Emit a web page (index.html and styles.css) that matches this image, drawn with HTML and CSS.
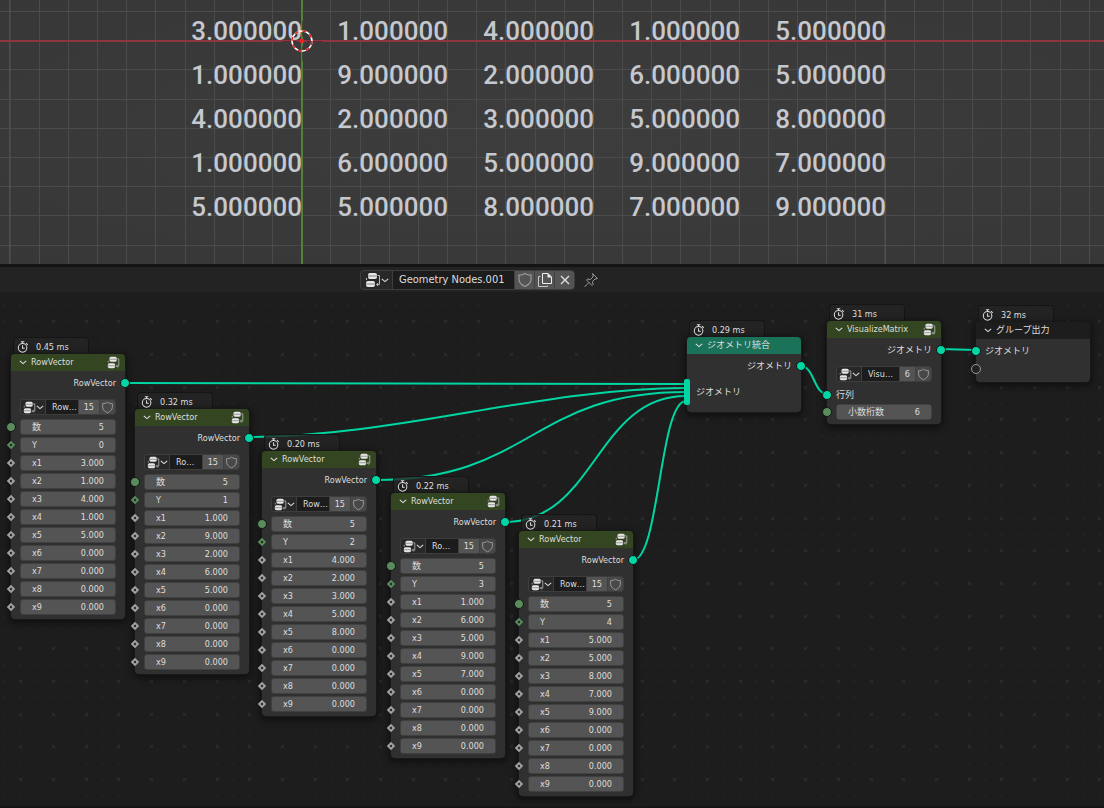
FILE: index.html
```
<!DOCTYPE html>
<html lang="ja">
<head>
    <meta charset="UTF-8">
    <title>Geometry Nodes</title>
    <link rel="stylesheet" href="styles.css">
</head>

<body>
    <svg class="symbols" aria-hidden="true">
        <symbol id="icon-tree" viewBox="0 0 16 16">
            <rect x="3" y="1" width="9" height="6" rx="2" fill="#e6e6e6"/>
            <rect x="1" y="9" width="9" height="6" rx="2" fill="#e6e6e6"/>
            <path d="M3 4h9M1 12h9" stroke="#6a6a6a" stroke-width="0.800" fill="none"/>
            <path d="M12.500 3.500h2v9h-3M13.200 10.800l-1.700 1.700 1.700 1.700M1.500 8V6" stroke="#b8b8b8" fill="none"/>
        </symbol>
        <symbol id="icon-chevron" viewBox="0 0 10 10">
            <path d="M1 3.500L5 7l4-3.500" stroke="currentColor" stroke-width="1.300" fill="none"/>
        </symbol>
        <symbol id="icon-shield" viewBox="0 0 16 16">
            <path d="M8 1.500C6 3 4 3.200 2 3.200V7.500c0 3.500 3 5.500 6 7 3-1.500 6-3.500 6-7V3.200C12 3.200 10 3 8 1.500z" stroke="currentColor" stroke-width="1.200" fill="none"/>
        </symbol>
        <symbol id="icon-copy" viewBox="0 0 16 16">
            <path d="M5.500 1.500h5.500l3.500 3.500v6.500h-9z" stroke="#eeeeee" fill="none"/>
            <path d="M10.500 1l4.500 4.500h-4.500z" fill="#eeeeee"/>
            <path d="M3.500 4.500h-2v10h9v-1" stroke="#c8c8c8" fill="none"/>
        </symbol>
        <symbol id="icon-close" viewBox="0 0 16 16">
            <path d="M4 4l8 8M12 4l-8 8" stroke="#e6e6e6" stroke-width="1.200" fill="none"/>
        </symbol>
        <symbol id="icon-pin" viewBox="0 0 16 16">
            <path d="M9.500 1.500l5 5-1.500.500-1 0-2.500 2.500.500 3-1 1L3.500 8l1-1 3 .500L10 5V3zM6 10.500l-4.500 4.500" stroke="#9a9a9a" fill="none"/>
        </symbol>
        <symbol id="icon-timer" viewBox="0 0 14 14">
            <circle cx="6.500" cy="8" r="5" stroke="#dddddd" stroke-width="1.200" fill="none"/>
            <path d="M4.500 1h4M6.500 1v2M10.500 2.500l2 2M6.500 5v3.500h2.500" stroke="#dddddd" stroke-width="1.200" fill="none"/>
        </symbol>
    </svg>

    <section class="viewport">
        <svg class="viewport-grid">
            <path id="floor" stroke="#4b4b4b"/>
            <path d="M10 0V264M593.500 0V264M885 0V264" stroke="#555555"/>
            <rect y="40" width="100%" height="2" fill="#8f3540"/>
            <rect x="301" width="2" height="100%" fill="#54803a"/>
        </svg>
        <table class="matrix">
            <tr><td>3.000000</td><td>1.000000</td><td>4.000000</td><td>1.000000</td><td>5.000000</td></tr>
            <tr><td>1.000000</td><td>9.000000</td><td>2.000000</td><td>6.000000</td><td>5.000000</td></tr>
            <tr><td>4.000000</td><td>2.000000</td><td>3.000000</td><td>5.000000</td><td>8.000000</td></tr>
            <tr><td>1.000000</td><td>6.000000</td><td>5.000000</td><td>9.000000</td><td>7.000000</td></tr>
            <tr><td>5.000000</td><td>5.000000</td><td>8.000000</td><td>7.000000</td><td>9.000000</td></tr>
        </table>
        <svg class="cursor" viewBox="0 0 40 40">
            <path d="M0 20.500h15M25 20.500h15M20.500 0v15M20.500 25v15" stroke="#222222" opacity="0.500"/>
            <circle cx="20" cy="20" r="10" fill="none" stroke="#ffffff" stroke-width="1.500"/>
            <circle cx="20" cy="20" r="10" fill="none" stroke="#e02020" stroke-width="1.500" stroke-dasharray="3.930"/>
            <rect x="18" y="18" width="4" height="4" fill="#f02020"/>
        </svg>
    </section>

    <header class="toolbar">
        <div class="picker picker-large">
            <button class="pick" aria-label="Browse node trees"><svg class="icon"><use href="#icon-tree"/></svg><svg class="chevron"><use href="#icon-chevron"/></svg></button>
            <input class="name" aria-label="Node tree name" value="Geometry Nodes.001">
            <button class="cell" aria-label="Fake user"><svg class="icon muted"><use href="#icon-shield"/></svg></button>
            <button class="cell" aria-label="New node tree"><svg class="icon"><use href="#icon-copy"/></svg></button>
            <button class="cell" aria-label="Unlink"><svg class="icon"><use href="#icon-close"/></svg></button>
        </div>
        <button class="pin" aria-label="Pin"><svg class="icon"><use href="#icon-pin"/></svg></button>
    </header>

    <main class="editor">
        <svg class="backdrop">
            <path id="dots-minor" fill="#202020"/>
            <path id="dots" fill="#292929"/>
            <g id="links"></g>
        </svg>
        <div id="nodes"></div>
    </main>

    <script src="script.js"></script>
</body>
</html>
```

FILE: styles.css
```
* {
    box-sizing: border-box;
}
body {
    margin: 0;
    min-height: 100vh;
    display: flex;
    flex-direction: column;
    background-color: #1d1d1d;
    color: #dedede;
    font-family: "DejaVu Sans Condensed", "DejaVu Sans", "Noto Sans CJK JP", sans-serif;
    font-stretch: condensed;
    font-size: 9px;
    line-height: 12px;
}
button, input {
    font: inherit;
    color: inherit;
    margin: 0;
    padding: 0;
    border: none;
    border-radius: 0;
    background: none;
    min-width: 0;
}
button {
    cursor: pointer;
}
.symbols {
    display: none;
}

/* 3D viewport */
.viewport {
    position: relative;
    overflow: hidden;
    padding: 9px 0 35px 156px;
    background: radial-gradient(ellipse at center, #3d3d3d, #373737);
}
.viewport-grid {
    position: absolute;
    left: 0;
    top: 0;
    width: 100%;
    height: 100%;
}
.matrix {
    position: relative;
    border-collapse: collapse;
    table-layout: fixed;
    width: 730px;
    color: #c5c8ce;
    font-family: Roboto, sans-serif;
    font-stretch: normal;
    font-weight: 500;
    font-size: 26px;
    line-height: 44px;
}
.matrix td {
    height: 44px;
    padding: 0;
    text-align: right;
}
.cursor {
    position: absolute;
    left: 282px;
    top: 21px;
    width: 40px;
    height: 40px;
}

/* node editor header */
.toolbar {
    display: flex;
    align-items: center;
    gap: 8px;
    height: 28px;
    padding-left: 360px;
    border-top: 3px solid #141414;
    background-color: #232323;
    font-size: 11px;
}
.picker {
    display: flex;
    height: 16px;
    border: 1px solid #3d3d3d;
    border-radius: 3px;
    background-color: #282828;
    overflow: hidden;
}
.picker .pick {
    display: flex;
    align-items: center;
    justify-content: center;
    width: 24px;
    flex: none;
}
.picker .name {
    flex: 1;
    width: 0;
    padding-left: 6px;
    border-left: 1px solid #3d3d3d;
    background-color: #1c1c1c;
}
.picker .cell {
    display: flex;
    align-items: center;
    justify-content: center;
    padding: 0 5px;
    border-left: 1px solid #404040;
    background-color: #545454;
}
.picker .shield {
    width: 16px;
    padding: 0;
    background-color: #484848;
}
.icon {
    width: 13px;
    height: 13px;
    flex: none;
}
.muted {
    color: #9a9a9a;
}
.chevron {
    width: 8px;
    height: 8px;
    flex: none;
}
.picker-large {
    width: 215px;
    height: 20px;
    border-radius: 4px;
}
.picker-large .pick {
    width: 31px;
}
.picker-large .cell {
    width: 20px;
    padding: 0;
}
.toolbar .icon {
    width: 16px;
    height: 16px;
}
.pin {
    display: flex;
}

/* node canvas */
.editor {
    position: relative;
    flex: 1;
    min-height: 516px;
    overflow: hidden;
    border-bottom: 2px solid #161616;
}
.backdrop {
    position: absolute;
    left: 0;
    top: 0;
    width: 100%;
    height: 100%;
}
#links path {
    fill: none;
    stroke: #00d6a3;
    stroke-width: 2;
}
.node {
    position: absolute;
    width: 114px;
}
.timing {
    display: flex;
    align-items: center;
    gap: 7px;
    width: 76px;
    height: 17px;
    margin-left: 2px;
    padding: 2px 0 0 3px;
    border: 1px solid #151515;
    border-bottom: none;
    border-radius: 4px 4px 0 0;
    background-color: rgba(37, 37, 37, 0.8);
}
.timing svg {
    width: 12px;
    height: 12px;
}
.box {
    border-radius: 4px;
    background-color: #303030;
    box-shadow: 0 0 0 1px #181818, 0 2px 7px 2px rgba(0, 0, 0, 0.5);
}
.title {
    display: flex;
    align-items: center;
    gap: 4px;
    height: 17px;
    padding: 0 5px 1px 8px;
    border-radius: 4px 4px 0 0;
    background-color: #344621;
}
.title.join {
    background-color: #1a7259;
}
.title.output {
    background-color: #1d1d1d;
}
.title .icon {
    margin-left: auto;
}
.body {
    padding: 0 9px 4px;
}
.title.output + .body {
    padding-top: 3px;
}
.line {
    position: relative;
    display: flex;
    align-items: center;
    height: 24px;
}
.line.out {
    justify-content: flex-end;
}
.line.tall {
    height: 28px;
    margin-bottom: 2px;
}
.line.short {
    height: 18px;
}
.node .picker {
    margin: 4px 0;
}
.fields {
    display: grid;
    gap: 2px;
}
.field {
    position: relative;
    display: flex;
    align-items: center;
    height: 16px;
    padding: 0 11px;
    border: 1px solid #404040;
    border-radius: 3px;
    background-color: #545454;
}
.field label {
    flex: none;
}
.field input {
    flex: 1;
    width: 0;
    text-align: right;
}

/* sockets sit on the node edges */
.socket {
    position: absolute;
    left: -14px;
    top: 50%;
    width: 10px;
    height: 10px;
    margin-top: -5px;
    border-radius: 50%;
    border: 1px solid #141414;
    background-color: #598c5c;
}
.field .socket {
    left: -15px;
}
.socket.geometry {
    background-color: #00d6a3;
}
.out .socket {
    left: auto;
    right: -14px;
}
.socket.empty {
    border: 1px solid #9a9a9a;
    background-color: #222222;
}
.socket.multi {
    left: -12px;
    width: 6px;
    height: 26px;
    margin-top: -13px;
    border: none;
    border-radius: 2px;
}
.socket.diamond {
    width: 6px;
    height: 6px;
    margin: -3px 0 0 2px;
    border: 2px solid #a1a1a1;
    border-radius: 0;
    background-color: #1d1d1d;
    transform: rotate(45deg);
}
.socket.diamond.integer {
    border-color: #598c5c;
}
```

FILE: script.js
```
// positions are relative to the editor canvas
const rowVectors = [
    { x: 11, y: 45, time: '0.45', name: 'Row…', values: [5, 0, 3, 1, 4, 1, 5] },
    { x: 135, y: 100, time: '0.32', name: 'Ro…', values: [5, 1, 1, 9, 2, 6, 5] },
    { x: 262, y: 142, time: '0.20', name: 'Row…', values: [5, 2, 4, 2, 3, 5, 8] },
    { x: 391, y: 184, time: '0.22', name: 'Ro…', values: [5, 3, 1, 6, 5, 9, 7] },
    { x: 519, y: 222, time: '0.21', name: 'Row…', values: [5, 4, 5, 5, 8, 7, 9] }
];

const links = [
    [125, 91, 686, 92],
    [249, 145, 686, 96],
    [376, 188, 686, 100],
    [505, 230, 686, 104],
    [633, 268, 686, 109],
    [801, 74, 827, 102],
    [941, 57, 976, 58]
];

function icon(name, cls) {
    return `<svg class="${cls}"><use href="#icon-${name}"/></svg>`;
}

function node(x, y, time, title, type, body) {
    return `<article class="node" style="left:${x}px;top:${y}px">
        <div class="timing">${icon('timer', 'timer')}<span>${time} ms</span></div>
        <div class="box">
            <div class="title ${type}">${icon('chevron', 'chevron')}<span>${title}</span>${type === 'group' ? icon('tree', 'icon') : ''}</div>
            <div class="body">${body}</div>
        </div>
    </article>`;
}

function output(label) {
    return `<div class="line out">${label}<i class="socket geometry"></i></div>`;
}

function picker(name, users) {
    return `<div class="picker">
        <button class="pick" aria-label="Browse">${icon('tree', 'icon')}${icon('chevron', 'chevron')}</button>
        <input class="name" aria-label="Group name" value="${name}">
        <button class="cell">${users}</button>
        <button class="cell shield" aria-label="Fake user">${icon('shield', 'icon muted')}</button>
    </div>`;
}

function field(id, label, value, socket) {
    return `<div class="field"><i class="socket ${socket}"></i><label for="${id}">${label}</label><input id="${id}" value="${value}"></div>`;
}

let html = '';
rowVectors.forEach((n, i) => {
    let fields = field(`n${i}-count`, '数', n.values[0], '') + field(`n${i}-y`, 'Y', n.values[1], 'diamond integer');
    for (let k = 1; k <= 9; k++) {
        fields += field(`n${i}-x${k}`, 'x' + k, (n.values[k + 1] || 0).toFixed(3), 'diamond');
    }
    html += node(n.x, n.y, n.time, 'RowVector', 'group',
        output('RowVector') + picker(n.name, 15) + `<div class="fields">${fields}</div>`);
});

html += node(687, 28, '0.29', 'ジオメトリ統合', 'join',
    output('ジオメトリ') + '<div class="line tall"><i class="socket geometry multi"></i>ジオメトリ</div>');

html += node(827, 12, '31', 'VisualizeMatrix', 'group',
    output('ジオメトリ') + picker('Visu…', 6) +
    '<div class="line short"><i class="socket geometry"></i>行列</div>' +
    field('digits', '小数桁数', 6, ''));

html += node(976, 13, '32', 'グループ出力', 'output',
    '<div class="line short"><i class="socket geometry"></i>ジオメトリ</div>' +
    '<div class="line short"><i class="socket empty"></i></div>');

document.getElementById('nodes').innerHTML = html;

// flat links get shorter handles
document.getElementById('links').innerHTML = links.map(([x1, y1, x2, y2]) => {
    const dx = x2 - x1;
    const slope = Math.abs((y2 - y1) / dx);
    const handle = dx / 2 * Math.min(1, slope * 6);
    return `<path d="M${x1} ${y1}C${x1 + handle} ${y1} ${x2 - handle} ${y2} ${x2} ${y2}"/>`;
}).join('');

// floor grid, counted out from the world origin
let floor = '';
for (let i = -11; i < 80; i++) {
    floor += `M${Math.floor(301.7 + i * 29.17) + 0.5} 0v264`;
}
for (let i = -1; i < 8; i++) {
    floor += `M0 ${Math.floor(40.7 + i * 29.2) + 0.5}h2600`;
}
document.getElementById('floor').setAttribute('d', floor);

// backdrop dots, every second one brighter
let dots = '';
let minor = '';
for (let r = 0; r < 60; r++) {
    for (let c = 0; c < 120; c++) {
        const dot = `M${Math.round(3 + c * 16.35)} ${Math.round(12 + r * 16.35)}h3v3h-3z`;
        if (r % 2 && c % 2) {
            dots += dot;
        } else {
            minor += dot;
        }
    }
}
document.getElementById('dots').setAttribute('d', dots);
document.getElementById('dots-minor').setAttribute('d', minor);
```
